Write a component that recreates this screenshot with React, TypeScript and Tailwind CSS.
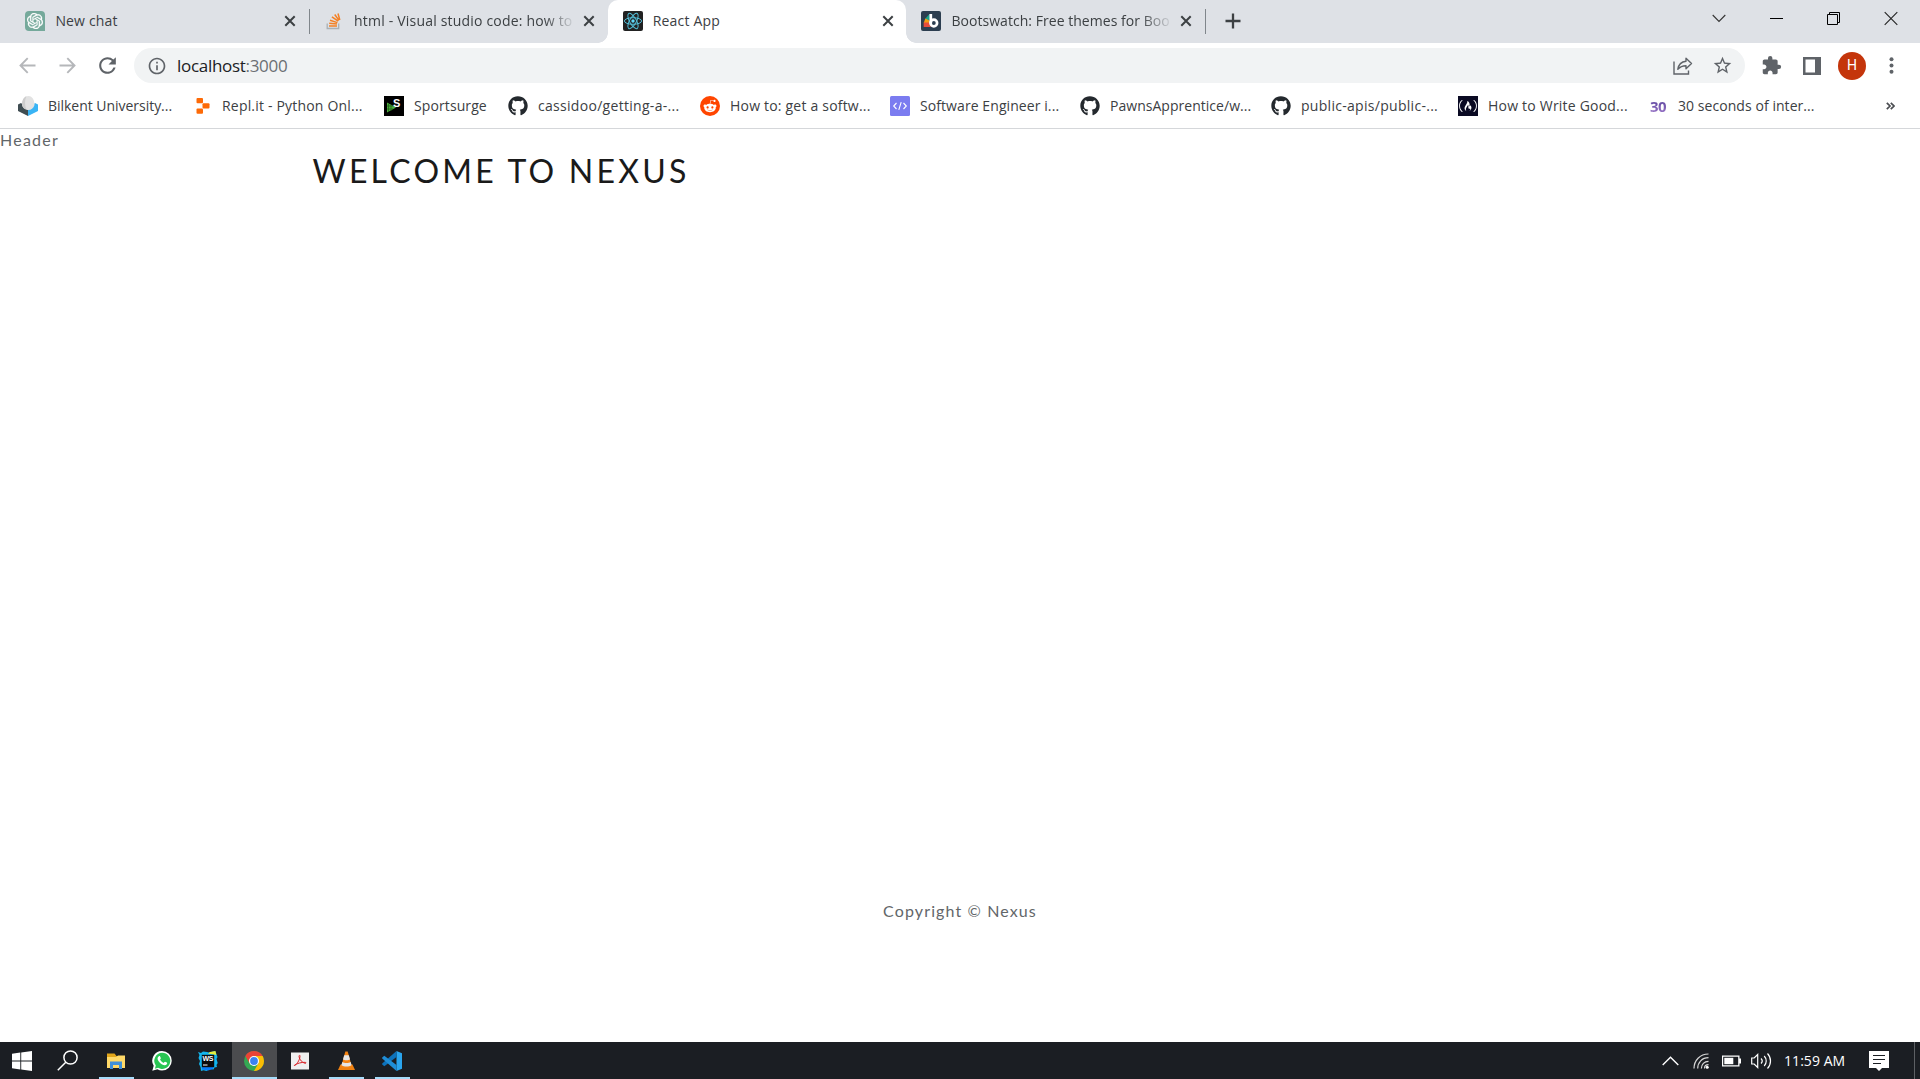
import React from "react";
import { FaGithub, FaRedditAlien, FaFreeCodeCamp } from "react-icons/fa";
import { SiOpenai } from "react-icons/si";
import { MdExtension, MdInfoOutline, MdRefresh, MdStarBorder } from "react-icons/md";

function OpenAiIcon() {
  return (
    <span className="flex h-5 w-5 items-center justify-center rounded-[4px] rounded-br-none bg-[#75a99b] text-white">
      <SiOpenai size={16} stroke="white" strokeWidth={0.5} />
    </span>
  );
}

function StackIcon() {
  return (
    <svg width="20" height="20" viewBox="0 0 20 20" fill="none">
      <path d="M3.200 12.500v5h11.500v-5" stroke="#aab0b5" strokeWidth="1.300" />
      <path d="M5 15h8M5.200 12.200l7.800.9M6 9.200l7.400 2.400M7.900 5.800l6.300 4.300M10.700 3.500l4.300 5.900M14 2.500l1.800 6.500" stroke="#f48024" strokeWidth="1.500" />
    </svg>
  );
}

function ReactIcon() {
  return (
    <svg width="20" height="20" viewBox="0 0 20 20" fill="none">
      <rect width="20" height="20" rx="2" fill="#222" />
      <g stroke="#53bdd6" strokeWidth="1">
        <ellipse cx="10" cy="10" rx="8.600" ry="3.300" />
        <ellipse cx="10" cy="10" rx="8.600" ry="3.300" transform="rotate(60 10 10)" />
        <ellipse cx="10" cy="10" rx="8.600" ry="3.300" transform="rotate(120 10 10)" />
      </g>
      <circle cx="10" cy="10" r="1.700" fill="#61dafb" />
    </svg>
  );
}

function BootswatchIcon() {
  return (
    <svg width="20" height="20" viewBox="0 0 20 20" fill="none">
      <rect width="20" height="20" rx="2" fill="#2c3e50" />
      <path d="M8.500 3v5L6 9z" fill="#3498db" />
      <path d="M8.500 3 4 8l2.500 3.500 2-3z" fill="#18a689" />
      <path d="M4.300 7.600 2.700 12l5.800.5v-3z" fill="#f39c12" />
      <path d="M2.700 11.500V16h7l-1.500-4.500z" fill="#e74c3c" />
      <path d="M9.800 3v9.500" stroke="#fff" strokeWidth="2.700" />
      <circle cx="12.800" cy="12" r="3.300" stroke="#fff" strokeWidth="2.700" />
    </svg>
  );
}

function BilkentIcon() {
  return (
    <svg width="20" height="20" viewBox="0 0 20 20">
      <path d="M0 8.500 3 7l7 6v7L0 15z" fill="#3f4d52" />
      <path d="M20 8.500 17 7l-7 6v7l10-5z" fill="#39b4f5" />
      <path d="M4 9c0-4.500 2.500-9 6.500-9S16.500 4.500 16.500 9c-1 3.500-3.500 5-6 5S5 12.500 4 9z" fill="#e2e2e2" />
      <path d="M4 8.500C3.800 4.500 6 .7 8.500.2 6.500 4 6.500 9 8.500 13.600 6 13 4.500 11.500 4 8.500z" fill="#cdcdcd" />
    </svg>
  );
}

function ReplitIcon() {
  return (
    <svg width="20" height="20" viewBox="0 0 20 20" fill="#fd6a07">
      <rect x="4.500" y="2" width="6.500" height="5.300" rx="1" />
      <rect x="10.500" y="7.300" width="7" height="5.200" rx="1" />
      <rect x="4.500" y="12.500" width="6.500" height="5.300" rx="1" />
    </svg>
  );
}

function SportsurgeIcon() {
  return (
    <span className="relative h-5 w-5 bg-black">
      <svg width="20" height="20" viewBox="0 0 20 20" fill="none">
        <path d="M3 6.500l9 5-9 5z" fill="#4cae3c" />
        <path d="M4.500 8v8M7 9v6M3 10h6M3 13h6" stroke="#1d5a17" strokeWidth=".7" />
      </svg>
      <span className="absolute top-[1px] left-[9px] font-['Liberation_Sans'] text-[11px] leading-[13px] font-bold text-white">S</span>
    </span>
  );
}

function GithubIcon() {
  return <FaGithub size={20} color="#24292e" />;
}

function RedditIcon() {
  return (
    <span className="flex h-5 w-5 items-center justify-center rounded-full bg-[#ff4500] text-white">
      <FaRedditAlien size={14} />
    </span>
  );
}

function CodeIcon() {
  return (
    <svg width="20" height="20" viewBox="0 0 20 20" fill="none">
      <rect width="20" height="20" rx="1.500" fill="#7b7cf0" />
      <path d="M6.500 7 3.700 10l2.800 3M13.500 7l2.800 3-2.800 3M11.200 6.200 8.800 13.800" stroke="#fff" strokeWidth="1.100" />
    </svg>
  );
}

function FreeCodeCampIcon() {
  return (
    <span className="flex h-5 w-5 items-center justify-center bg-[#0a0a23] text-white">
      <FaFreeCodeCamp size={18} />
    </span>
  );
}

function ThirtyIcon() {
  return (
    <span className="flex h-5 w-5 items-center justify-center bg-gradient-to-b from-[#4b3590] to-[#a77fd0] bg-clip-text text-[15px] font-bold tracking-[-0.600px] text-transparent">
      30
    </span>
  );
}

function CloseIcon({ className }: { className?: string }) {
  return (
    <svg className={className} width="12" height="12" viewBox="0 0 12 12" fill="none" stroke="#3c4043" strokeWidth="2">
      <path d="M1.300 1.300l9.400 9.400M10.700 1.300l-9.400 9.400" />
    </svg>
  );
}

type TabProps = { icon: React.ReactNode; title: string; spacing: string; active?: boolean; fade?: boolean; divider?: boolean };

function Tab({ icon, title, spacing, active, fade, divider }: TabProps) {
  return (
    <div className={`relative flex h-[43px] w-[298.700px] shrink-0 items-center pb-[1px] pl-[15px] ${active ? "rounded-t-[10px] bg-white" : ""}`}>
      <span className="flex h-5 w-5 shrink-0">{icon}</span>
      <span
        className={`ml-[10px] w-[219px] shrink-0 overflow-hidden text-[14px] leading-5 whitespace-nowrap text-[#3c4043] ${spacing} ${fade ? "[mask-image:linear-gradient(to_right,black_190px,transparent_222px)]" : ""}`}
      >
        {title}
      </span>
      <CloseIcon className="ml-[10px] shrink-0" />
      {divider && <span className="absolute top-[9px] right-[-1px] h-[25px] w-px bg-[#80868b]" />}
      {active && (
        <>
          <span className="absolute bottom-0 left-[-10px] h-[10px] w-[10px] bg-[radial-gradient(circle_at_0_0,transparent_9.500px,white_10px)]" />
          <span className="absolute right-[-10px] bottom-0 h-[10px] w-[10px] bg-[radial-gradient(circle_at_100%_0,transparent_9.500px,white_10px)]" />
        </>
      )}
    </div>
  );
}

function TabStrip() {
  return (
    <div className="flex h-[43px] bg-[#dee1e6] pl-[10.400px]">
      <Tab icon={<OpenAiIcon />} title="New chat" spacing="tracking-[0.150px]" divider />
      <Tab icon={<StackIcon />} title="html - Visual studio code: how to" spacing="tracking-[0.190px]" fade />
      <Tab icon={<ReactIcon />} title="React App" spacing="tracking-[0.170px]" active />
      <Tab icon={<BootswatchIcon />} title="Bootswatch: Free themes for Boo" spacing="tracking-[0.040px]" fade divider />
      <svg className="mt-[13px] ml-[20px]" width="16" height="16" viewBox="0 0 16 16" stroke="#3c4043" strokeWidth="2.300">
        <path d="M8 .5v15M.5 8h15" />
      </svg>
      <div className="ml-auto flex pt-[11px] pr-[22px]">
        <svg className="mr-[44px]" width="14" height="15" viewBox="0 0 14 15" fill="none" stroke="#333" strokeWidth="1.100">
          <path d="M.7 4l6.300 6.500L13.300 4" />
        </svg>
        <svg className="mr-[44px]" width="13" height="15" viewBox="0 0 13 15">
          <path d="M0 7h13v1H0z" fill="#000" />
        </svg>
        <svg className="mr-[44px]" width="13" height="15" viewBox="0 0 13 15" fill="none" stroke="#000">
          <path d="M.5 3.500h10v10H.5zM2.500 3.500v-2h10v10h-2" />
        </svg>
        <svg width="14" height="15" viewBox="0 0 14 15" fill="none" stroke="#222" strokeWidth="1.100">
          <path d="M.7 1.200l12.600 12.600M13.300 1.200.7 13.800" />
        </svg>
      </div>
    </div>
  );
}

function Toolbar() {
  return (
    <div className="flex h-[45px] items-center bg-white pl-[19px] text-[#5f6368]">
      <svg width="17" height="17" viewBox="0 0 17 17" fill="none" stroke="#b5b7ba" strokeWidth="1.900">
        <path d="M16.500 8.500H1.500M8.700 1.200 1.500 8.500l7.200 7.300" />
      </svg>
      <svg className="ml-[23px]" width="17" height="17" viewBox="0 0 17 17" fill="none" stroke="#b5b7ba" strokeWidth="1.900">
        <path d="M.5 8.500h15M8.300 1.200l7.200 7.300-7.200 7.300" />
      </svg>
      <MdRefresh className="ml-[19px]" size={25} />
      <div className="ml-[14px] flex h-[35px] w-[1611px] items-center rounded-full bg-[#f1f3f4] pr-[12px] pl-[13px]">
        <MdInfoOutline size={20} />
        <span className="ml-[10px] text-[17px] leading-[22px] tracking-[-0.300px] text-[#202124]">
          localhost<span className="text-[#6b6f73]">:3000</span>
        </span>
        <svg className="ml-auto" width="20" height="18" viewBox="0 0 20 18" fill="none" stroke="#5f6368" strokeWidth="1.400">
          <path d="M1 4.500V17h14.500v-3.500" />
          <path d="M13 1.200 18.500 6.500 13 11.800V8.700c-3.700 0-6 1-8.200 3.600C5.500 8 8.200 4.800 13 4.300z" strokeLinejoin="round" />
        </svg>
        <MdStarBorder className="ml-[19px]" size={21} />
      </div>
      <MdExtension className="ml-[16px]" size={21} />
      <svg className="ml-[20.500px]" width="18" height="18" viewBox="0 0 18 18">
        <path d="M0 0h18v18H0zM2.500 2.500v13H12v-13z" fill="#5f6368" fillRule="evenodd" />
      </svg>
      <span className="ml-[17.500px] flex h-7 w-7 items-center justify-center rounded-full bg-[#c4350b] font-[Roboto] text-[14px] text-white">H</span>
      <svg className="ml-[23px]" width="5" height="17" viewBox="0 0 5 17" fill="#5f6368">
        <circle cx="2.500" cy="2.200" r="2" />
        <circle cx="2.500" cy="8.500" r="2" />
        <circle cx="2.500" cy="14.800" r="2" />
      </svg>
    </div>
  );
}

const bookmarks = [
  { title: "Bilkent University...", icon: <BilkentIcon />, box: "w-[174px] tracking-[-0.030px]" },
  { title: "Repl.it - Python Onl...", icon: <ReplitIcon />, box: "w-[192px] tracking-[0.190px]" },
  { title: "Sportsurge", icon: <SportsurgeIcon />, box: "w-[124px] tracking-[0.100px]" },
  { title: "cassidoo/getting-a-...", icon: <GithubIcon />, box: "w-[192px] tracking-[0.300px]" },
  { title: "How to: get a softw...", icon: <RedditIcon />, box: "w-[190px] tracking-[0.200px]" },
  { title: "Software Engineer i...", icon: <CodeIcon />, box: "w-[190px] tracking-[0.080px]" },
  { title: "PawnsApprentice/w...", icon: <GithubIcon />, box: "w-[191px] tracking-[0.030px]" },
  { title: "public-apis/public-...", icon: <GithubIcon />, box: "w-[187px] tracking-[0.290px]" },
  { title: "How to Write Good...", icon: <FreeCodeCampIcon />, box: "w-[190px] tracking-[0.210px]" },
  { title: "30 seconds of inter...", icon: <ThirtyIcon />, box: "w-[190px] tracking-[0.060px]" },
];

function BookmarksBar() {
  return (
    <div className="flex h-[41px] items-center border-b border-[#d5d7da] bg-white pb-[5px] pl-[18px]">
      {bookmarks.map((b) => (
        <div key={b.title} className={`flex shrink-0 items-center gap-[10px] text-[14px] leading-5 whitespace-nowrap text-[#3c4043] ${b.box}`}>
          <span className="flex h-5 w-5 shrink-0">{b.icon}</span>
          <span>{b.title}</span>
        </div>
      ))}
      <svg className="mr-[25px] ml-auto" width="9" height="8" viewBox="0 0 9 8" fill="none" stroke="#4a4d51" strokeWidth="1.700">
        <path d="M.8.8 4 4 .8 7.200M4.800.8 8 4 4.800 7.200" />
      </svg>
    </div>
  );
}

function Page() {
  return (
    <main className="flex flex-1 flex-col bg-white font-['Lato'] text-[#626669]">
      <header className="-mt-px h-6 text-[16px] leading-6 tracking-[1.250px]">Header</header>
      <h1 className="pl-[312.500px] text-[32px] leading-[38px] tracking-[3.250px] text-[#1a1a1a]">WELCOME TO NEXUS</h1>
      <footer className="mt-auto mb-[119px] text-center text-[16px] leading-6 tracking-[1.120px]">Copyright © Nexus</footer>
    </main>
  );
}

function WindowsIcon() {
  return (
    <svg width="20" height="20" viewBox="0 0 20 20" fill="#fff">
      <path d="M0 2.800 8.300 1.500v8H0zM9.200 1.400 20 0v9.500H9.200zM0 10.500h8.300v8L0 17.200zM9.200 10.500H20V20L9.200 18.600z" />
    </svg>
  );
}

function SearchIcon() {
  return (
    <svg width="21" height="21" viewBox="0 0 21 21" fill="none" stroke="#fff" strokeWidth="1.500">
      <circle cx="13.500" cy="7.500" r="6.600" />
      <path d="M8.800 12.200.8 20.300" />
    </svg>
  );
}

function FolderIcon() {
  return (
    <svg width="18" height="18" viewBox="0 0 18 18">
      <path d="M0 1.500h7.500L9.500 4H18v4H0z" fill="#e2a61a" />
      <path d="M0 5h9l2-1.500h7V16H0z" fill="#ffd968" />
      <path d="M3 17v-7.500h12V17h-3v-4H6v4z" fill="#3f8fd8" />
    </svg>
  );
}

function WhatsappIcon() {
  return (
    <svg width="20" height="20" viewBox="0 0 20 20">
      <path d="M10 0a9.700 9.700 0 0 1 0 19.500c-1.700 0-3.200-.4-4.600-1.200L.3 19.800l1.400-5A9.700 9.700 0 0 1 10 0z" fill="#fff" />
      <path d="M10.200 1.700a8.100 8.100 0 1 1-4.100 15.100l-3.200.9.900-3.200a8.100 8.100 0 0 1 6.400-12.800z" fill="#29c653" />
      <path d="M6.900 5.200c.4-.4 1-.3 1.200.2l.7 1.600c.2.500-.5 1.100-.8 1.500.8 1.600 2 2.700 3.600 3.400.5-.5 1-1.400 1.500-1.200l1.700.8c.6.3.4 1.200 0 1.700-1 1.300-2.800 1.200-4.700.2-2-1-3.600-2.800-4.300-4.600-.5-1.500-.1-2.700 1.100-3.600z" fill="#fff" />
    </svg>
  );
}

function WebStormIcon() {
  return (
    <span className="relative h-5 w-5">
      <svg width="20" height="20" viewBox="0 0 20 20">
        <path d="M0 1l3 1 2-1.500L9 1l2 .5L17 0l1 2 1.500 4-1 2 1.200 4-1.200 2 .5 2-2.500.5-1 2-4-.5-3 2-3-.7L3 20l-.5-4L1 13l1-3L.5 7l1-3z" fill="#12b5ee" />
        <path d="M10 2.500 12 1l5.500-1 .8 4z" fill="#e8ee3c" />
        <path d="M4 15h11v3l-5 1.500L4 18.500z" fill="#087cfa" />
        <rect x="3.800" y="3.800" width="12.400" height="12.400" fill="#0b0b0d" />
        <path d="M5 14h4.500" stroke="#fff" strokeWidth="1" />
      </svg>
      <span className="absolute top-[4px] left-[4.500px] font-['Liberation_Sans'] text-[7px] leading-[8px] font-bold tracking-[-0.300px] text-white">WS</span>
    </span>
  );
}

function ChromeIcon() {
  return (
    <svg width="20" height="20" viewBox="0 0 20 20">
      <circle cx="10" cy="10" r="10" fill="#34a853" />
      <path d="M1.340 5A10 10 0 0 1 18.660 5H10L5.670 12.500z" fill="#ea4335" />
      <path d="M18.660 5A10 10 0 0 1 10 20L14.330 12.500 10 5z" fill="#fbbc04" />
      <circle cx="10" cy="10" r="5" fill="#fff" />
      <circle cx="10" cy="10" r="3.900" fill="#3b82f0" />
    </svg>
  );
}

function AcrobatIcon() {
  return (
    <svg width="18" height="18" viewBox="0 0 18 18" fill="none">
      <rect y=".5" width="18" height="17" fill="#efefef" />
      <path d="M3.500 13.500c2.200-.8 5-5 5.500-9 .2-2.200-1.300-1.200-.9.500.7 3 3 5.500 5.900 6.300 1.500.2 1.300-1 .1-1-3.700-.1-7.500 1-10.200 2.600-1 .6-.8 1-.4.6z" stroke="#d9252a" strokeWidth="1" />
    </svg>
  );
}

function VlcIcon() {
  return (
    <svg width="17" height="20" viewBox="0 0 17 20">
      <path d="M2.500 13.500h12L17 19H0z" fill="#ee8011" />
      <path d="M7.300.5h2.400L14 16c-2 1.500-9 1.500-11 0z" fill="#f58412" />
      <path d="M6.200 4.300h4.600L12 8.600c-1.500 1-5.500 1-7 0zM4.300 11c2 1.300 6.400 1.300 8.400 0l.9 3.200c-2.500 1.700-7.700 1.700-10.200 0z" fill="#e6e6e6" />
    </svg>
  );
}

function VsCodeIcon() {
  return (
    <svg width="20" height="20" viewBox="0 0 20 20">
      <path d="M14.500 0 20 2.300v15.400L14.500 20z" fill="#2aa5ee" />
      <path d="M14.500 0v6L2.300 15.200.2 13.500v-1z" fill="#0d72bb" />
      <path d="M14.500 20v-6L2.300 4.800.2 6.500v1z" fill="#1f8ed8" />
    </svg>
  );
}

const taskButtons = [
  { name: "Files", icon: <FolderIcon />, running: true },
  { name: "WhatsApp", icon: <WhatsappIcon /> },
  { name: "WebStorm", icon: <WebStormIcon /> },
  { name: "Chrome", icon: <ChromeIcon />, current: true },
  { name: "Acrobat", icon: <AcrobatIcon /> },
  { name: "VLC", icon: <VlcIcon />, running: true },
  { name: "VS Code", icon: <VsCodeIcon />, running: true },
];

function Taskbar() {
  return (
    <div className="flex h-[37px] bg-[#1b1e23]">
      <span className="flex w-[44px] items-center justify-center">
        <WindowsIcon />
      </span>
      <span className="flex w-[49px] items-center pl-[13px]">
        <SearchIcon />
      </span>
      {taskButtons.map((t) => (
        <span key={t.name} title={t.name} className="relative flex w-[46px] items-center justify-center">
          {t.current && <span className="absolute inset-y-0 right-0 left-px border-b-2 border-[#a6dcfa] bg-[#4b4c4f]" />}
          <span className="relative flex">{t.icon}</span>
          {t.running && <span className="absolute bottom-0 left-[6px] h-[2px] w-[35px] bg-[#a6dcfa]" />}
        </span>
      ))}
      <div className="ml-auto flex items-center text-white">
        <svg width="17" height="10" viewBox="0 0 17 10" fill="none" stroke="#fff" strokeWidth="1.400">
          <path d="M.7 9l7.800-7.800L16.300 9" />
        </svg>
        <svg className="ml-[14px]" width="16" height="16" viewBox="0 0 16 16" fill="none" stroke="#d8d8d8" strokeWidth="1.200">
          <path d="M1 15.500C1 7.500 7 1 15.500 1M4.700 15.500c0-6 4.300-10.800 10.800-10.800M8.400 15.500c0-4 2.800-7.200 7.100-7.200" />
          <path d="M11.500 15.500c0-2 1.200-3.800 4-3.800" />
          <circle cx="14.200" cy="14.300" r="1.500" fill="#fff" stroke="none" />
        </svg>
        <svg className="ml-[13px]" width="19" height="12" viewBox="0 0 19 12" fill="#fff">
          <path d="M0 .5h17.500v3H19v5h-1.500v3H0zM1.200 1.700v8.600h15V1.700z" fillRule="evenodd" />
          <path d="M2.300 2.800h9v6.400h-9z" />
        </svg>
        <svg className="ml-[10px]" width="21" height="18" viewBox="0 0 21 18" fill="none" stroke="#fff" strokeWidth="1.200">
          <path d="M.7 6v6h2.500l3.500 3.500v-13L3.200 6z" />
          <path d="M10 6.500c1.500 1.500 1.500 3.500 0 5M13.200 4c2.700 2.800 2.700 7.200 0 10M16.500 1.500c4 4.200 4 10.800 0 15" />
        </svg>
        <span className="mt-[1px] ml-[12px] w-[64px] text-[14px] leading-5 tracking-[0.060px] whitespace-nowrap">11:59 AM</span>
        <svg className="mt-[1px] ml-[21px]" width="20" height="20" viewBox="0 0 20 20">
          <path d="M0 0h20v17h-7l-3 3-3-3H0z" fill="#fff" />
          <path d="M4 4.500h12M4 8.500h12M4 12.500h8" stroke="#1b1e23" strokeWidth="1.200" />
        </svg>
        <span className="ml-[25px] h-[37px] w-px bg-[#5d6064]" />
        <span className="w-[5px]" />
      </div>
    </div>
  );
}

export default function App() {
  return (
    <div className="flex h-[1079px] w-[1920px] flex-col overflow-hidden bg-white font-['Open_Sans',sans-serif]">
      <TabStrip />
      <Toolbar />
      <BookmarksBar />
      <Page />
      <Taskbar />
    </div>
  );
}
